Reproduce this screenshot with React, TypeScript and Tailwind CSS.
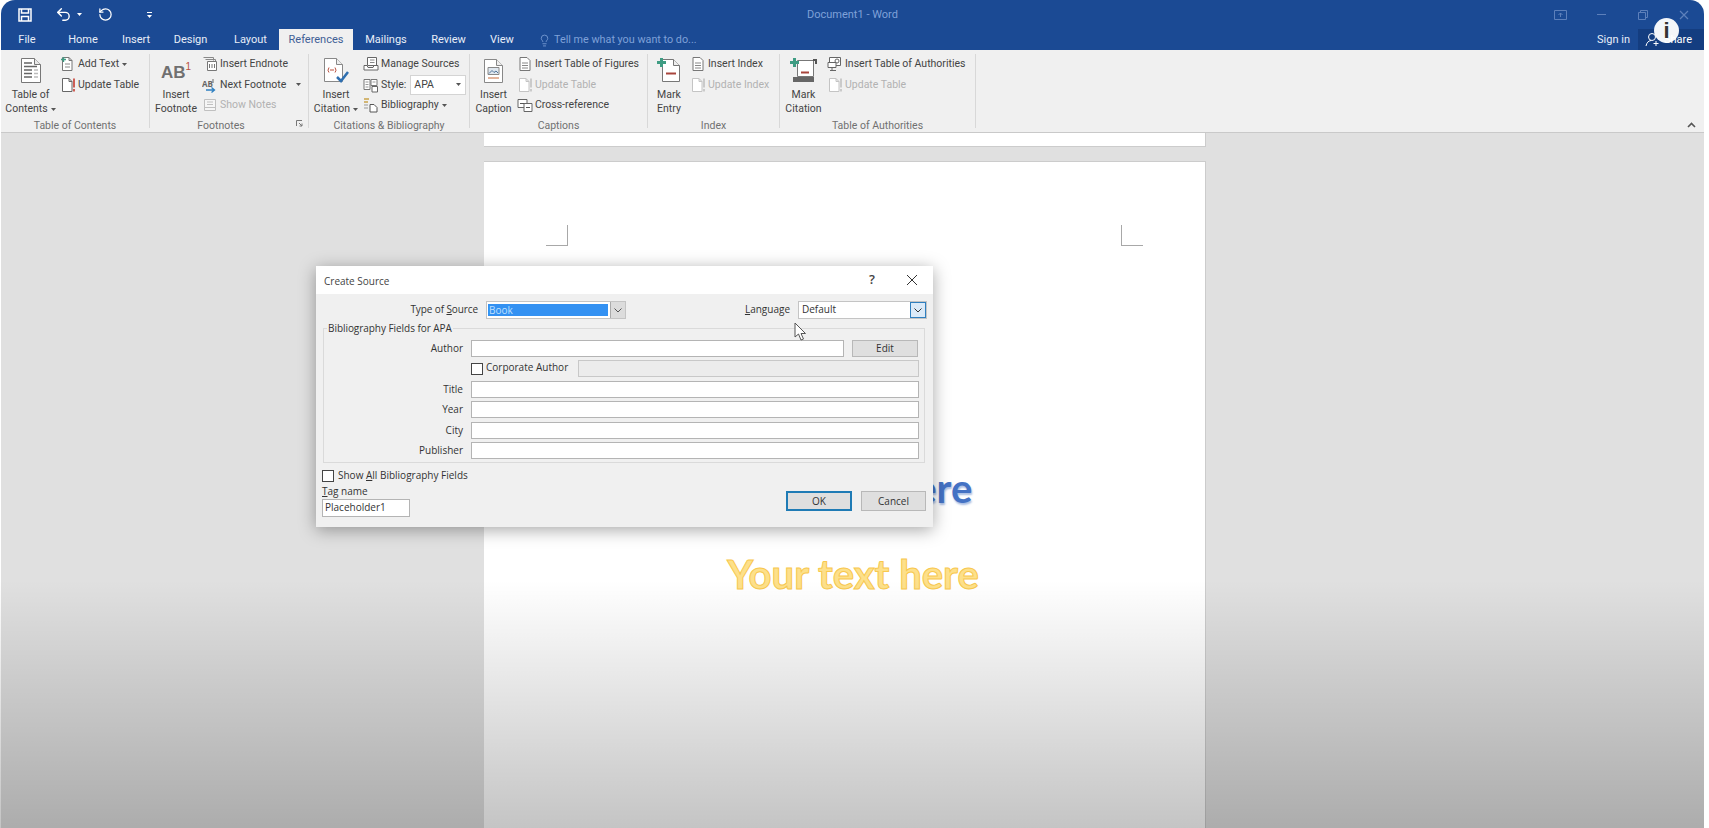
import { Lightbulb, RotateCcw, Undo2 } from "lucide-react";
import type { ReactNode } from "react";

const sans = "font-['Open_Sans','Liberation_Sans',sans-serif]";

function Caret({ className = "fill-[#555]" }: { className?: string }) {
  return (
    <svg width="5" height="3" viewBox="0 0 5 3" className={className}>
      <path d="M0 0h5L2.500 3z" />
    </svg>
  );
}

function Sheet({ c = "#777" }: { c?: string }) {
  return <path d="M2.500 1.500h6.500l3 3v10h-9.500z M9 1.500v3h3" fill="#fff" stroke={c} />;
}

function IconBox({ children }: { children: ReactNode }) {
  return (
    <svg width="16" height="16" viewBox="0 0 16 16" className="shrink-0">
      {children}
    </svg>
  );
}

function AddTextIcon() {
  return (
    <IconBox>
      <Sheet />
      <path d="M5 8h5M5 11h5" stroke="#888" />
      <path d="M1 3.500h5M3.500 1v5" stroke="#3f9c83" strokeWidth="1.400" />
    </IconBox>
  );
}

function UpdateIcon({ disabled = false }: { disabled?: boolean }) {
  return (
    <IconBox>
      <Sheet c={disabled ? "#c4c4c4" : "#666"} />
      <path d="M14 1.500v9M14 12v2.500" stroke={disabled ? "#c4c4c4" : "#c8453a"} strokeWidth="1.700" />
    </IconBox>
  );
}

function EndnoteIcon() {
  return (
    <IconBox>
      <path d="M1.500 1.500h10v3M3.500 3.500h10v3" fill="none" stroke="#888" />
      <path d="M5.500 5.500h9v9h-9z" fill="#fff" stroke="#777" />
      <path d="M7.500 8v4M10 8v4M12.500 8v4" stroke="#777" />
    </IconBox>
  );
}

function NextFootnoteIcon() {
  return (
    <IconBox>
      <text x="0" y="10" fontSize="8" fontWeight="700" fill="#666" fontFamily="Open Sans">AB</text>
      <path d="M11 2v4" stroke="#666" />
      <path d="M4 13h8M9.500 10.500l3 2.500-3 2.500" fill="none" stroke="#2d7fc1" strokeWidth="1.300" />
    </IconBox>
  );
}

function ShowNotesIcon() {
  return (
    <IconBox>
      <path d="M2.500 2.500h11v11h-11z" fill="#f6f6f6" stroke="#c0c0c0" />
      <path d="M2.500 10.500h11M5 5h6M5 7.500h6" stroke="#c0c0c0" />
    </IconBox>
  );
}

function ManageIcon() {
  return (
    <IconBox>
      <path d="M4.500 1.500h9v8h-9z" fill="#fff" stroke="#666" />
      <path d="M1 9.500h3l1 2h5l1-2h4v4.500H1z" fill="#fff" stroke="#666" />
      <path d="M7 4h4.500M7 6.500h4.500" stroke="#888" />
    </IconBox>
  );
}

function StyleIcon() {
  return (
    <IconBox>
      <path d="M1 2.500h6v10H1zM8 2.500h6v6H8z" fill="#fff" stroke="#777" />
      <path d="M2.500 5h3M2.500 7.500h3M2.500 10h3M9.500 5h3" stroke="#999" />
      <path d="M9 9.500h5.500v5.500H9z" fill="#fff" stroke="#666" />
    </IconBox>
  );
}

function BibIcon() {
  return (
    <IconBox>
      <path d="M1 2h5M1 5h4" stroke="#c9a24a" strokeWidth="1.400" />
      <path d="M1 8h4M1 11h4" stroke="#b5b5b5" strokeWidth="1.400" />
      <path d="M7 7.500h4l3 3v4.500H7z" fill="#fff" stroke="#555" />
    </IconBox>
  );
}

function FiguresIcon() {
  return (
    <IconBox>
      <path d="M3 1.500h7l3 3v10H3z" fill="#fff" stroke="#777" />
      <path d="M5 7h6M5 9.500h6M5 12h6" stroke="#888" />
    </IconBox>
  );
}

function CrossRefIcon() {
  return (
    <IconBox>
      <path d="M1 2.500h9v8H1z" fill="#fff" stroke="#666" />
      <path d="M7 6.500h8v8H7z" fill="#fff" stroke="#666" />
      <path d="M3 6.500h4M9 10.500h4" stroke="#555" />
    </IconBox>
  );
}

function AuthoritiesIcon() {
  return (
    <IconBox>
      <path d="M2.500 1.500h11v8h-11z" fill="#fff" stroke="#666" />
      <path d="M1 6.500h8v5H1z" fill="#fff" stroke="#666" />
      <path d="M3 14.500h6M5 11.500v3" stroke="#666" />
      <circle cx="10" cy="5" r="2" fill="none" stroke="#666" />
    </IconBox>
  );
}

function TocIcon() {
  return (
    <svg width="22" height="27" viewBox="0 0 22 27">
      <path d="M1.500 1.500h13l6 6v18h-19z" fill="#fff" stroke="#777" />
      <path d="M14.500 1.500v6h6" fill="#e9e9e9" stroke="#777" />
      <path d="M4 6h8M4 9.500h13M4 13h8M4 16.500h8M4 20h8" stroke="#666" strokeWidth="1.500" />
      <path d="M14.500 13h3M14.500 16.500h3M14.500 20h3" stroke="#777" strokeWidth="1.500" strokeDasharray="1 1" />
    </svg>
  );
}

function CitationIcon() {
  return (
    <svg width="26" height="27" viewBox="0 0 26 27">
      <path d="M1.500 1.500h12l6 6v17h-18z" fill="#fff" stroke="#888" />
      <path d="M13.500 1.500v6h6" fill="#eee" stroke="#888" />
      <path d="M6 10.500q-2 3 0 5M12 10.500q2 3 0 5" fill="none" stroke="#b9503f" />
      <path d="M7 13h4" stroke="#b9503f" />
      <path d="M14 20l4 4 7-9" fill="none" stroke="#2f6fb0" strokeWidth="2.500" />
    </svg>
  );
}

function CaptionIcon() {
  return (
    <svg width="21" height="26" viewBox="0 0 21 26">
      <path d="M1.500 1.500h12l6 6v17h-18z" fill="#fff" stroke="#888" />
      <path d="M13.500 1.500v6h6" fill="#eee" stroke="#888" />
      <path d="M5 9.500h11v7H5z" fill="#dfe7ef" stroke="#888" />
      <path d="M6 15.500l3-3 2 2 2-1.500 2 2" fill="none" stroke="#50749a" />
      <path d="M5 20h11" stroke="#c66a3b" />
    </svg>
  );
}

function MarkEntryIcon() {
  return (
    <svg width="25" height="27" viewBox="0 0 25 27">
      <path d="M5.500 2.500h11l6 6v16h-17z" fill="#fff" stroke="#777" />
      <path d="M16.500 2.500v6h6" fill="#eee" stroke="#777" />
      <path d="M9 16.500h10" stroke="#a8453c" strokeWidth="2" />
      <path d="M0 5.500h9M4.500 1v9" stroke="#3f9c83" strokeWidth="3" />
    </svg>
  );
}

function MarkCitationIcon() {
  return (
    <svg width="28" height="27" viewBox="0 0 28 27">
      <path d="M7.500 3.500h16v16h-16z" fill="#fff" stroke="#777" />
      <path d="M23 3h3v4" fill="none" stroke="#555" strokeWidth="2" />
      <path d="M11 15.500h8" stroke="#a8453c" strokeWidth="2" />
      <path d="M3 20h21v5H3z" fill="#666" />
      <path d="M0 5.500h9M4.500 1v9" stroke="#3f9c83" strokeWidth="3" />
    </svg>
  );
}

function FootnoteIcon() {
  return (
    <div className="mt-[5px] flex items-start text-[#707070] font-['Liberation_Sans',sans-serif] font-bold">
      <span className="text-[17px] leading-[22px]">AB</span>
      <span className="text-[10px] leading-[10px] font-normal text-[#b9503f]">1</span>
    </div>
  );
}

function BigButton({ width, icon, lines, caret }: { width: string; icon: ReactNode; lines: string[]; caret?: boolean }) {
  return (
    <div className={`${width} shrink-0 flex flex-col items-center`}>
      <div className="mt-[4px] h-[25px] mb-[5px] flex items-center justify-center">{icon}</div>
      {lines.map((line, i) => (
        <div key={line} className="h-[14px] leading-[14px] whitespace-nowrap flex items-center gap-[3px]">
          {line}
          {caret && i === lines.length - 1 && <Caret />}
        </div>
      ))}
    </div>
  );
}

function SmallButton({ icon, label, disabled, children }: { icon: ReactNode; label: string; disabled?: boolean; children?: ReactNode }) {
  return (
    <div className={`h-[20.500px] flex items-center whitespace-nowrap ${disabled ? "text-[#b2b2b2]" : ""}`}>
      {icon}
      <span className="ml-[2px]">{label}</span>
      {children}
    </div>
  );
}

function Group({ width, label, pad, children, launcher }: { width: string; label: string; pad?: string; children: ReactNode; launcher?: boolean }) {
  return (
    <div className={`${width} h-[74px] shrink-0 flex flex-col border-r border-[#d8d8d8] relative`}>
      <div className="h-[64px] flex">{children}</div>
      <div className={`h-[10px] leading-[16px] text-center text-[#707070] whitespace-nowrap ${pad ?? ""}`}>{label}</div>
      {launcher && (
        <svg width="7" height="7" viewBox="0 0 7 7" className="absolute right-[5px] bottom-[1px]">
          <path d="M0.500 6V0.500H6M3 3l3 3M6 3.500V6H3.500" fill="none" stroke="#777" />
        </svg>
      )}
    </div>
  );
}

function Ribbon() {
  return (
    <div className="h-[83px] shrink-0 bg-[#f0f0f0] border-b border-[#c9c9c9] pt-[4px] flex font-['Roboto',sans-serif] text-[10.500px] text-[#444] relative">
      <Group width="w-[149px]" label="Table of Contents">
        <BigButton width="w-[59px]" icon={<TocIcon />} lines={["Table of", "Contents"]} caret />
        <div>
          <SmallButton icon={<AddTextIcon />} label="Add Text">
            <span className="ml-[3px]"><Caret /></span>
          </SmallButton>
          <SmallButton icon={<UpdateIcon />} label="Update Table" />
        </div>
      </Group>
      <Group width="w-[159px]" label="Footnotes" pad="pr-4" launcher>
        <BigButton width="w-[52px]" icon={<FootnoteIcon />} lines={["Insert", "Footnote"]} />
        <div>
          <SmallButton icon={<EndnoteIcon />} label="Insert Endnote" />
          <SmallButton icon={<NextFootnoteIcon />} label="Next Footnote">
            <span className="ml-[10px]"><Caret /></span>
          </SmallButton>
          <SmallButton icon={<ShowNotesIcon />} label="Show Notes" disabled />
        </div>
      </Group>
      <Group width="w-[161px]" label="Citations & Bibliography">
        <BigButton width="w-[54px]" icon={<CitationIcon />} lines={["Insert", "Citation"]} caret />
        <div>
          <SmallButton icon={<ManageIcon />} label="Manage Sources" />
          <SmallButton icon={<StyleIcon />} label="Style:">
            <div className="ml-[4px] w-[56px] h-[20px] bg-white border border-[#d4d4d4] flex items-center justify-between pl-[3px] pr-[4px]">
              APA
              <Caret />
            </div>
          </SmallButton>
          <SmallButton icon={<BibIcon />} label="Bibliography">
            <span className="ml-[3px]"><Caret /></span>
          </SmallButton>
        </div>
      </Group>
      <Group width="w-[178px]" label="Captions">
        <BigButton width="w-[47px]" icon={<CaptionIcon />} lines={["Insert", "Caption"]} />
        <div>
          <SmallButton icon={<FiguresIcon />} label="Insert Table of Figures" />
          <SmallButton icon={<UpdateIcon disabled />} label="Update Table" disabled />
          <SmallButton icon={<CrossRefIcon />} label="Cross-reference" />
        </div>
      </Group>
      <Group width="w-[132px]" label="Index">
        <BigButton width="w-[42px]" icon={<MarkEntryIcon />} lines={["Mark", "Entry"]} />
        <div>
          <SmallButton icon={<FiguresIcon />} label="Insert Index" />
          <SmallButton icon={<UpdateIcon disabled />} label="Update Index" disabled />
        </div>
      </Group>
      <Group width="w-[196px]" label="Table of Authorities">
        <BigButton width="w-[47px]" icon={<MarkCitationIcon />} lines={["Mark", "Citation"]} />
        <div>
          <SmallButton icon={<AuthoritiesIcon />} label="Insert Table of Authorities" />
          <SmallButton icon={<UpdateIcon disabled />} label="Update Table" disabled />
        </div>
      </Group>
      <svg width="9" height="6" viewBox="0 0 9 6" className="absolute right-[8px] bottom-[4px]">
        <path d="M1 5l3.500-3.500L8 5" fill="none" stroke="#555" strokeWidth="1.600" />
      </svg>
    </div>
  );
}

function TitleBar() {
  return (
    <div className="h-[29px] flex items-center text-[#7fa1d8] font-['Roboto',sans-serif] text-[11px]">
      <div className="ml-4 w-4 flex justify-center">
        <svg width="14" height="14" viewBox="0 0 14 14" fill="none" stroke="#fff" strokeWidth="1.500">
          <path d="M1 1h12v12H1z" />
          <path d="M3.500 1v4h7V1M3.500 13V8.500h7V13" />
        </svg>
      </div>
      <Undo2 size={17} strokeWidth={2} className="ml-[22px] text-white" />
      <Caret className="ml-[5px] fill-white" />
      <RotateCcw size={15} strokeWidth={2} className="ml-[16px] text-white" />
      <div className="ml-[34px] flex flex-col items-center gap-[2px]">
        <div className="w-[5px] h-px bg-white" />
        <Caret className="fill-white" />
      </div>
      <span className="ml-[655px] pt-px whitespace-nowrap">Document1 - Word</span>
      <div className="ml-auto flex text-[#5d80bb]">
        <div className="w-[41px] flex justify-center">
          <svg width="13" height="10" viewBox="0 0 13 10" fill="none" stroke="currentColor">
            <path d="M.500.500h12v9H.500zM6.500 7V3M4.500 5l2-2 2 2" />
          </svg>
        </div>
        <div className="w-[41px] flex justify-center items-center">
          <div className="w-[9px] h-px bg-current" />
        </div>
        <div className="w-[41px] flex justify-center">
          <svg width="10" height="10" viewBox="0 0 10 10" fill="none" stroke="currentColor">
            <path d="M.500 2.500h7v7h-7zM2.500 2.500v-2h7v7h-2" />
          </svg>
        </div>
        <div className="w-[41px] flex justify-center">
          <svg width="10" height="10" viewBox="0 0 10 10" fill="none" stroke="currentColor" strokeWidth="1.200">
            <path d="M1 1l8 8M9 1l-8 8" />
          </svg>
        </div>
      </div>
    </div>
  );
}

const tabs = [
  { name: "File", width: "w-[52px]" },
  { name: "Home", width: "w-[60px]" },
  { name: "Insert", width: "w-[46px]" },
  { name: "Design", width: "w-[63px]" },
  { name: "Layout", width: "w-[57px]" },
  { name: "References", width: "w-[74px]" },
  { name: "Mailings", width: "w-[66px]" },
  { name: "Review", width: "w-[59px]" },
  { name: "View", width: "w-[48px]" },
];

function TabRow() {
  return (
    <div className="h-[21px] flex font-['Roboto',sans-serif] text-[11px] text-[#e8eef8]">
      {tabs.map((tab) => (
        <div
          key={tab.name}
          className={`${tab.width} pt-px flex items-center justify-center ${tab.name === "References" ? "bg-[#f0f0f0] text-[#3f5f96]" : ""}`}
        >
          {tab.name}
        </div>
      ))}
      <div className="ml-[12px] pt-px flex items-center text-[#7fa1d8]">
        <Lightbulb size={13} strokeWidth={1.500} />
        <span className="ml-[3px] text-[10.800px]">Tell me what you want to do...</span>
      </div>
      <div className="ml-auto flex items-center">
        <span className="mr-2 pt-px">Sign in</span>
        <div className="w-[66px] h-full bg-[#143d80] flex items-center pl-[7px] text-white">
          <svg width="15" height="15" viewBox="0 0 15 15" fill="none" stroke="#fff" className="shrink-0">
            <circle cx="7" cy="5" r="3.500" />
            <path d="M1 14q1-5 5-5.500M11 9v5M8.500 11.500h5" />
          </svg>
          <span className="ml-[4px] pt-px">Share</span>
        </div>
      </div>
    </div>
  );
}

function Document() {
  return (
    <div className="flex-1 bg-[#e0e0e0] pl-[483px] flex flex-col overflow-hidden">
      <div className="w-[722px] h-[14px] shrink-0 bg-white border-b border-r border-[#cccccc]" />
      <div className="mt-[14px] w-[722px] flex-1 bg-white border-r border-t border-[#cccccc] pt-[63px] px-[62px]">
        <div className="flex justify-between">
          <div className="w-[22px] h-[21px] border-r border-b border-[#a8a8a8]" />
          <div className="w-[22px] h-[21px] border-l border-b border-[#a8a8a8]" />
        </div>
        <div className="mt-[217px] flex flex-col items-center font-['Lato',sans-serif] font-bold text-[40px] leading-[50px]">
          <div className="ml-[4px] text-[#4472c4] [text-shadow:1px_2px_2px_#a9bde2]">Your text here</div>
          <div className="mt-[36px] ml-[17px] text-[#fde08a] [-webkit-text-stroke:1px_#f8c84e]">Your text here</div>
        </div>
      </div>
    </div>
  );
}

function TextBox({ width, disabled, children }: { width: string; disabled?: boolean; children?: ReactNode }) {
  return (
    <div className={`${width} h-[17px] shrink-0 border flex items-center px-[3px] ${disabled ? "bg-[#ececec] border-[#c8c8c8]" : "bg-white border-[#b4b4b4]"}`}>
      {children}
    </div>
  );
}

function CheckBox() {
  return <div className="w-[12px] h-[12px] shrink-0 bg-white border border-[#444]" />;
}

function FieldRow({ label, className }: { label: string; className: string }) {
  return (
    <div className={`flex items-center ${className}`}>
      <div className="w-[139px] mr-2 pb-px text-right">{label}</div>
      <TextBox width="w-[448px]" />
    </div>
  );
}

function Dialog() {
  return (
    <div className="absolute left-[316px] top-[266px] w-[617px] h-[261px] bg-[#f0f0f0] shadow-[0_3px_16px_rgba(0,0,0,0.35)] text-[10px] text-[#333]">
      <div className="h-[28px] bg-white flex items-center pl-2 pr-[15px] text-[10px] text-[#444]">
        <span className="pt-[2px]">Create Source</span>
        <span className="ml-auto text-[13px] font-semibold">?</span>
        <svg width="12" height="12" viewBox="0 0 12 12" fill="none" stroke="#333" className="ml-[31px]">
          <path d="M1 1l10 10M11 1L1 11" />
        </svg>
      </div>
      <div className="pt-[7px] flex items-center h-[25px]">
        <div className="w-[162px] pb-[2px] text-right tracking-[-0.1px]">Type of <span className="underline">S</span>ource</div>
        <div className="ml-2 w-[140px] h-[18px] bg-white border border-[#c4c4c4] flex items-center pl-px">
          <div className="flex-1 h-[12px] bg-[#3391f2] text-[#bfe0ff] leading-[12px] pl-px">Book</div>
          <div className="ml-[2px] w-[15px] h-full bg-[#dcdcdc] border-l border-[#aaa] flex items-center justify-center">
            <svg width="8" height="5" viewBox="0 0 8 5" fill="none" stroke="#555"><path d="M.500.500L4 4 7.500.500" /></svg>
          </div>
        </div>
        <div className="ml-auto pb-[2px]">
          <span className="underline">L</span>anguage
        </div>
        <div className="ml-2 mr-[6px] w-[129px] h-[18px] bg-white border border-[#c4c4c4] flex items-center pl-[3px]">
          <span className="flex-1 pb-px">Default</span>
          <div className="w-[16px] h-full bg-[#dbeaf8] border border-[#2f7fbf] flex items-center justify-center">
            <svg width="8" height="5" viewBox="0 0 8 5" fill="none" stroke="#333"><path d="M.500.500L4 4 7.500.500" /></svg>
          </div>
        </div>
      </div>
      <div className="mt-[9px] ml-[7px] w-[602px] h-[135px] border border-[#dadada] relative">
        <div className="absolute -top-[8px] left-[3px] bg-[#f0f0f0] px-px leading-[14px] font-medium tracking-[-0.05px]">Bibliography Fields for APA</div>
        <div className="mt-[11px] flex items-center">
          <div className="w-[139px] mr-2 pb-px text-right">Author</div>
          <TextBox width="w-[373px]" />
          <div className="ml-2 w-[66px] h-[17px] bg-[#dfdfdf] border border-[#b8b8b8] flex items-center justify-center">Edit</div>
        </div>
        <div className="mt-[3px] ml-[147px] flex items-center">
          <CheckBox />
          <span className="ml-[3px] pb-[2px]">Corporate Author</span>
          <div className="ml-auto mr-[5px]">
            <TextBox width="w-[341px]" disabled />
          </div>
        </div>
        <FieldRow label="Title" className="mt-[4px]" />
        <FieldRow label="Year" className="mt-[3px]" />
        <FieldRow label="City" className="mt-[4px]" />
        <FieldRow label="Publisher" className="mt-[3px]" />
      </div>
      <div className="mt-[7px] ml-[6px] flex items-center h-[12px]">
        <CheckBox />
        <span className="ml-[4px] pb-[2px]">Show <span className="underline">A</span>ll Bibliography Fields</span>
      </div>
      <div className="mt-[2px] ml-[6px] flex">
        <div>
          <div className="h-[15px] leading-[14px]"><span className="underline">T</span>ag name</div>
          <div className="w-[88px] h-[18px] bg-white border border-[#b4b4b4] flex items-center px-[2px] pb-px">Placeholder1</div>
        </div>
        <div className="ml-auto mr-[7px] mt-[7px] flex gap-[9px]">
          <div className="w-[66px] h-[20px] bg-[#dfdfdf] border-2 border-[#1f7bb5] flex items-center justify-center">OK</div>
          <div className="w-[65px] h-[20px] bg-[#dfdfdf] border border-[#b8b8b8] flex items-center justify-center">Cancel</div>
        </div>
      </div>
    </div>
  );
}

export default function App() {
  return (
    <div className={`relative w-[1709px] h-[828px] bg-white overflow-hidden ${sans}`}>
      <div className="ml-px w-[1703px] h-full flex flex-col rounded-t-[14px] overflow-hidden">
        <div className="shrink-0 bg-[#1b4a94]">
          <TitleBar />
          <TabRow />
        </div>
        <Ribbon />
        <Document />
      </div>
      <div className="absolute left-0 right-[5px] top-[580px] bottom-0 bg-gradient-to-b from-black/0 to-black/[.23] pointer-events-none" />
      <Dialog />
      <svg width="13" height="19" viewBox="0 0 13 19" className="absolute left-[794px] top-[322px]">
        <path d="M1 1v14l3.500-3 2.500 6 2.500-1-2.500-5.500h4.500z" fill="#fff" stroke="#555" />
      </svg>
      <div className="absolute left-[1654px] top-[18px] w-[25px] h-[25px] rounded-full bg-white/95 flex items-center justify-center text-[#333] text-[22px] font-bold leading-none font-['Liberation_Sans',sans-serif]">
        i
      </div>
    </div>
  );
}
